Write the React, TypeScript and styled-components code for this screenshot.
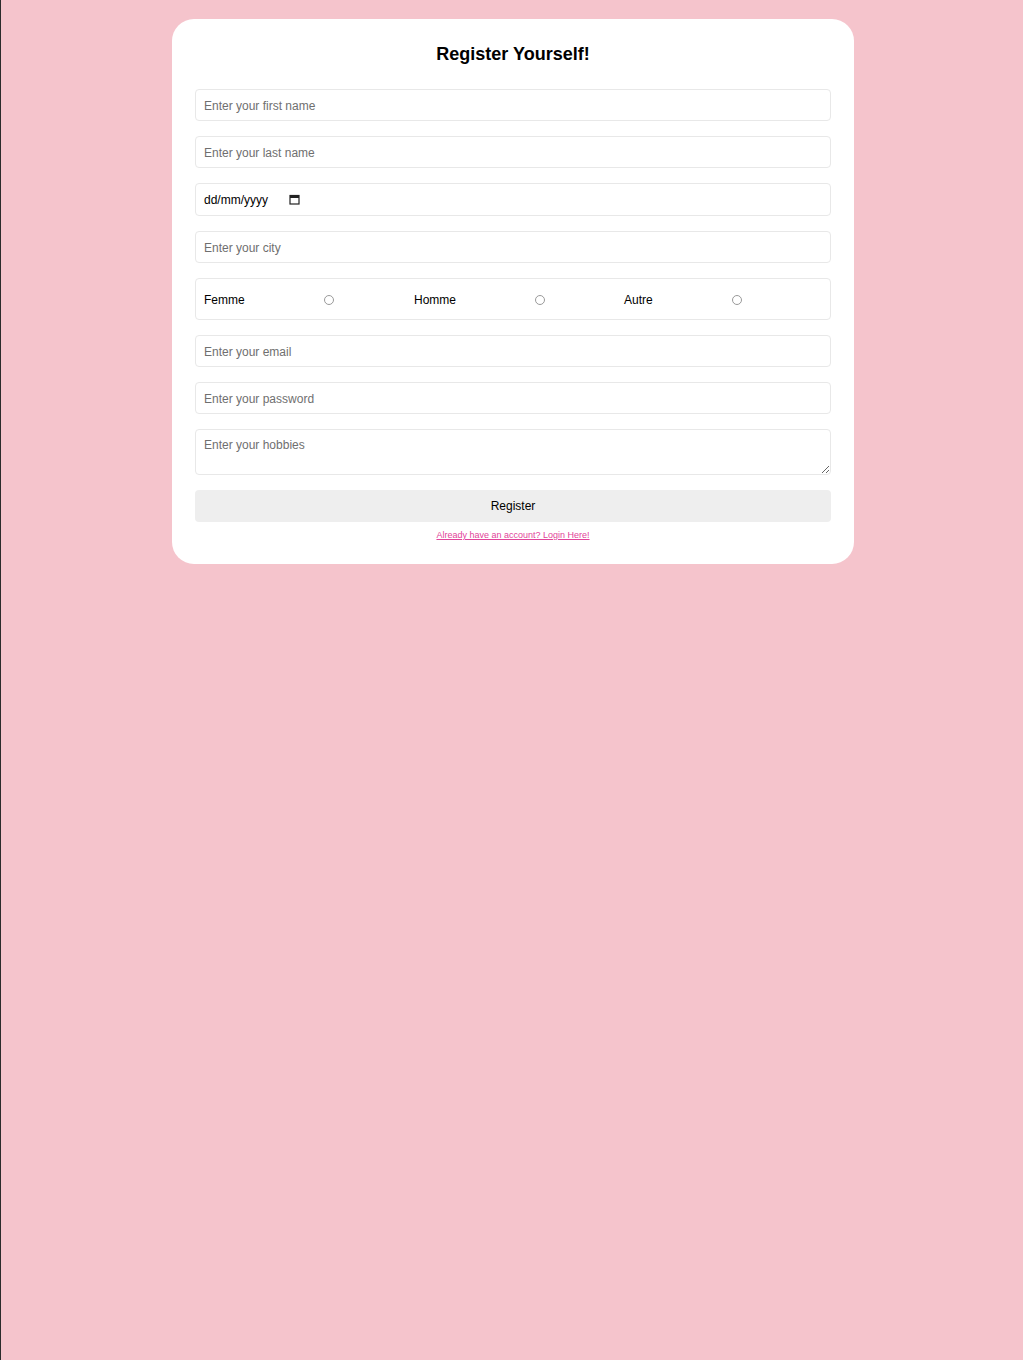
import * as React from "react";
import styled, { createGlobalStyle } from "styled-components";

const GlobalStyle = createGlobalStyle`
  html, body {
    margin: 0;
    padding: 0;
    background: #f5c4cc;
    font-family: "Liberation Sans", Arial, sans-serif;
  }
`;

const Page = styled.div`
  min-height: 1360px;
  border-left: 1px solid #2b2b2b;
  padding: 19px 0 0 2px;
  box-sizing: border-box;
`;

const Card = styled.form`
  width: 682px;
  margin: 0 auto;
  background: #fff;
  border-radius: 22px;
  padding: 24px 23px 23px;
  box-sizing: border-box;
  display: flex;
  flex-direction: column;
  gap: 15px;
`;

const Title = styled.h2`
  margin: 0 0 9px;
  font-size: 18px;
  line-height: 22px;
  font-weight: 700;
  text-align: center;
  color: #000;
`;

const Input = styled.input`
  height: 32px;
  width: 100%;
  box-sizing: border-box;
  border: 1px solid #e8e8e8;
  border-radius: 4px;
  padding: 1px 8px 0;
  font-family: inherit;
  font-size: 12px;
  color: #000;
  outline: none;

  &::placeholder {
    color: #6f6f6f;
  }
`;

const DateBox = styled.div`
  height: 33px;
  box-sizing: border-box;
  border: 1px solid #e8e8e8;
  border-radius: 4px;
  padding: 0 8px;
  display: flex;
  align-items: center;
  gap: 21px;
  font-size: 12px;
  color: #000;
`;

const GenderRow = styled.div`
  height: 42px;
  box-sizing: border-box;
  border: 1px solid #e8e8e8;
  border-radius: 4px;
  padding: 1px 8px 0;
  display: grid;
  grid-template-columns: repeat(3, 210px);
  align-items: center;
`;

const GenderOption = styled.label`
  display: flex;
  align-items: center;
  font-size: 12px;
  color: #000;
`;

const Radio = styled.input.attrs({ type: "radio" })`
  appearance: none;
  width: 10px;
  height: 10px;
  margin: 0 0 0 79px;
  border: 1px solid #9a9a9a;
  border-radius: 50%;
  background: #fff;
`;

const TextArea = styled.textarea`
  height: 46px;
  box-sizing: border-box;
  border: 1px solid #e8e8e8;
  border-radius: 4px;
  padding: 8px 8px;
  font-family: inherit;
  font-size: 12px;
  resize: vertical;
  outline: none;

  &::placeholder {
    color: #6f6f6f;
  }
`;

const Button = styled.button`
  height: 32px;
  border: none;
  border-radius: 4px;
  background: #eeeeee;
  font-family: inherit;
  font-size: 12px;
  color: #000;
`;

const LoginLink = styled.a`
  margin-top: -8px;
  text-align: center;
  font-size: 9px;
  line-height: 12px;
  color: #e2449a;
  text-decoration: underline;
`;

const CalendarIcon = () => (
  <svg width="11" height="11" viewBox="0 0 11 11">
    <rect x="1" y="1.5" width="9" height="8.5" fill="none" stroke="#222" strokeWidth="1.2" />
    <rect x="1" y="1.5" width="9" height="2.5" fill="#222" />
  </svg>
);

export default function App() {
  return (
    <>
      <GlobalStyle />
      <Page>
        <Card onSubmit={(e) => e.preventDefault()}>
          <Title>Register Yourself!</Title>
          <Input type="text" placeholder="Enter your first name" />
          <Input type="text" placeholder="Enter your last name" />
          <DateBox>
            <span>dd/mm/yyyy</span>
            <CalendarIcon />
          </DateBox>
          <Input type="text" placeholder="Enter your city" />
          <GenderRow>
            <GenderOption>
              Femme
              <Radio name="gender" value="femme" />
            </GenderOption>
            <GenderOption>
              Homme
              <Radio name="gender" value="homme" />
            </GenderOption>
            <GenderOption>
              Autre
              <Radio name="gender" value="autre" />
            </GenderOption>
          </GenderRow>
          <Input type="email" placeholder="Enter your email" />
          <Input type="password" placeholder="Enter your password" />
          <TextArea placeholder="Enter your hobbies" />
          <Button type="submit">Register</Button>
          <LoginLink href="#">Already have an account? Login Here!</LoginLink>
        </Card>
      </Page>
    </>
  );
}
